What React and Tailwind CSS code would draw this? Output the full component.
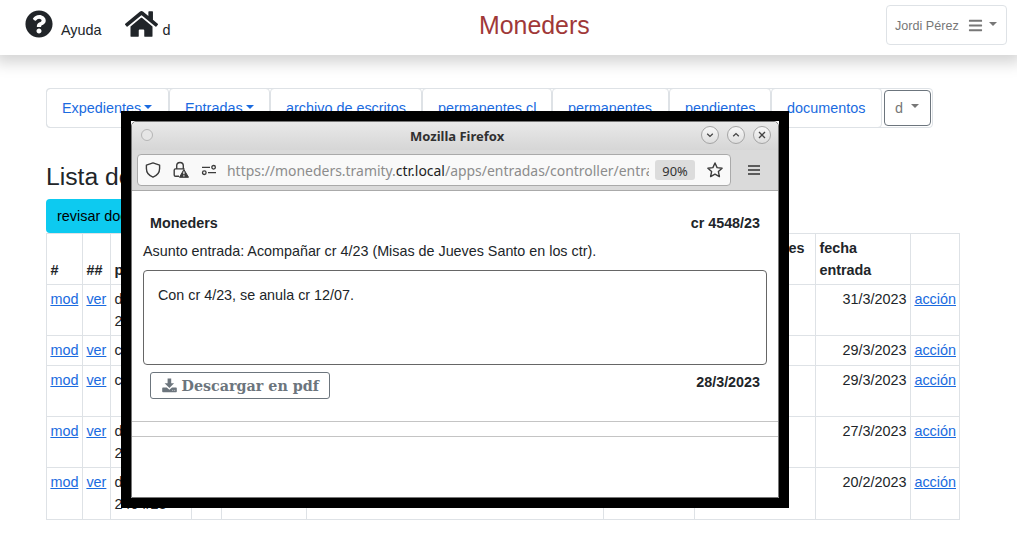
import React from "react";
import { FaQuestionCircle, FaHome, FaBars } from "react-icons/fa";

const menu = [
  { label: "Expedientes", width: "w-[123px]", caret: true },
  { label: "Entradas", width: "w-[101px]", caret: true },
  { label: "archivo de escritos", width: "w-[152px]" },
  { label: "permanentes cl", width: "w-[130px]" },
  { label: "permanentes", width: "w-[117px]" },
  { label: "pendientes", width: "w-[102px]" },
  { label: "documentos", width: "w-[111px]" },
];

const rows = [
  { protocol: ["dlb", "2611/23"], date: "31/3/2023", height: "h-[51px]" },
  { protocol: ["cr 5/23"], date: "29/3/2023", height: "h-[30px]" },
  { protocol: ["cr 4/23"], date: "29/3/2023", height: "h-[51px]" },
  { protocol: ["dlb", "2520/23"], date: "27/3/2023", height: "h-[51px]" },
  { protocol: ["dlb", "2404/23"], date: "20/2/2023", height: "h-[52px]" },
];

const columns = "grid grid-cols-[36px_28px_81px_30px_85px_297px_91px_121px_95px_49px]";
const cell = "border-r border-b border-[#dee2e6] pl-[3.4px] pr-[3.4px] pt-[3px]";

function Caret({ className = "" }) {
  return (
    <span
      className={`inline-block border-x-[4.3px] border-t-[4.3px] border-x-transparent border-t-current ${className}`}
    />
  );
}

function Header() {
  return (
    <header className="flex h-[55px] justify-between bg-white shadow-[0_3px_14px_5px_rgba(0,0,0,0.17)]">
      <div className="flex w-[300px] pl-[25px]">
        <FaQuestionCircle className="mt-[10px] size-[28px]" />
        <span className="ml-[8px] mt-[19px]">Ayuda</span>
        <FaHome className="ml-[23px] mt-[8px] h-[32px] w-[33px]" />
        <span className="ml-[5px] mt-[19px]">d</span>
      </div>
      <h1 className="mt-[6px] w-[300px] pl-[36px] text-[24.9px] leading-[38px] text-[#a03838]">Moneders</h1>
      <button className="mr-[10px] mt-[5px] flex h-[40px] w-[121px] items-center rounded-[4px] border border-[#dee2e6] pl-[8px] text-[12.6px] text-[#777]">
        <span className="mt-[2px] w-[73px] text-left">Jordi Pérez</span>
        <FaBars className="size-[15px]" />
        <Caret className="-mt-[2px] ml-[6px]" />
      </button>
    </header>
  );
}

function Menu() {
  return (
    <nav className="ml-[46px] mt-[33px] flex h-[40px] w-[887px] rounded-[4px] border border-[#dee2e6] text-[#1a6be0]">
      <div className="-ml-px -mt-px flex h-[40px]">
        {menu.map((m) => (
          <a
            key={m.label}
            className={`flex h-full shrink-0 items-center rounded-[4px] border border-[#dee2e6] pl-[15px] whitespace-nowrap ${m.width}`}
          >
            {m.label}
            {m.caret && <Caret className="ml-[3px] -mt-[3px]" />}
          </a>
        ))}
      </div>
      <button className="ml-[2px] mt-px flex h-[36px] w-[47px] items-center rounded-[4px] border border-[#6c757d] pl-[10px] text-[#777]">
        d
        <Caret className="ml-[8px] -mt-[4px]" />
      </button>
    </nav>
  );
}

function EntryTable() {
  return (
    <div className="ml-[46px] w-[914px] border-l border-t border-[#dee2e6]">
      <div className={`${columns} h-[51px] font-bold`}>
        <div className={`${cell} flex items-end pb-[3px]`}>#</div>
        <div className={`${cell} flex items-end pb-[3px]`}>##</div>
        <div className={`${cell} flex items-end pb-[3px]`}>protocolo</div>
        <div className={cell} />
        <div className={cell} />
        <div className={cell} />
        <div className={cell} />
        <div className={`${cell} flex justify-end`}>
          <span className="mr-[7px]">pendientes</span>
        </div>
        <div className={cell}>
          fecha
          <br />
          entrada
        </div>
        <div className={cell} />
      </div>
      {rows.map((r, i) => (
        <div key={i} className={`${columns} ${r.height}`}>
          <div className={cell}>
            <a className="text-[#1a6be0] underline">mod</a>
          </div>
          <div className={cell}>
            <a className="text-[#1a6be0] underline">ver</a>
          </div>
          <div className={cell}>
            {r.protocol.map((p) => (
              <div key={p}>{p}</div>
            ))}
          </div>
          <div className={cell} />
          <div className={cell} />
          <div className={cell} />
          <div className={cell} />
          <div className={cell} />
          <div className={`${cell} text-right`}>{r.date}</div>
          <div className={cell}>
            <a className="text-[#1a6be0] underline">acción</a>
          </div>
        </div>
      ))}
    </div>
  );
}

function WindowButton({ children }) {
  return (
    <span className="flex size-[18px] items-center justify-center rounded-full border border-[#a5a5a5] bg-linear-to-b from-[#f8f8f8] to-[#dedede]">
      <svg viewBox="0 0 10 10" className="size-[10px]" fill="none" stroke="#444" strokeWidth="1.3">
        {children}
      </svg>
    </span>
  );
}

function TitleBar() {
  return (
    <div className="flex h-[28px] items-center rounded-t-[4px] bg-linear-to-b from-[#e9e9e9] to-[#d6d6d6]">
      <span className="ml-[9px] -mt-[2px] size-[12px] rounded-full border border-[#b5b5b5] bg-[#e6e6e6]" />
      <span className="ml-[257px] -mt-[1px] w-[290px] font-['Noto_Sans',sans-serif] text-[13px] font-bold text-[#303030]">
        Mozilla Firefox
      </span>
      <div className="-mt-[2px] flex gap-[8px] pl-[0.5px]">
        <WindowButton>
          <path d="M2.2 3.8 5 6.4 7.8 3.8" />
        </WindowButton>
        <WindowButton>
          <path d="M2.2 6.2 5 3.6 7.8 6.2" />
        </WindowButton>
        <WindowButton>
          <path d="m2 2 6 6M8 2 2 8" />
        </WindowButton>
      </div>
    </div>
  );
}

function AddressBar() {
  return (
    <div className="flex h-[41px] items-center border-b border-[#aaa] bg-[#dadada] pl-[5px]">
      <div className="flex h-[32px] w-[594px] items-center rounded-[4px] border border-[#aaa] bg-[#f9f9f9] pl-[7px] text-[#3c3c3c]">
        <svg viewBox="0 0 16 16" className="size-[16px]" fill="none" stroke="currentColor" strokeWidth="1.4" strokeLinejoin="round">
          <path d="M8 .9 14.6 3.2V6.6C14.6 10.5 11.8 13.8 8 15.2 4.2 13.8 1.4 10.5 1.4 6.6V3.2Z" />
        </svg>
        <svg viewBox="0 0 16 18" className="ml-[12px] h-[18px] w-[16px]" fill="none">
          <path d="M3.7 8V4.8a3.3 3.3 0 0 1 6.6 0V8M6 15.2H2.5A1.3 1.3 0 0 1 1.2 13.9V9.2A1.3 1.3 0 0 1 2.5 7.9h9" stroke="currentColor" strokeWidth="1.4" />
          <path d="M10.9 8.5 15.5 16.3H6.5Z" fill="currentColor" stroke="currentColor" strokeLinejoin="round" />
          <path d="M10.9 10.5V13.2M10.9 14.3V15.5" stroke="#fff" strokeWidth="1.2" />
        </svg>
        <svg viewBox="0 0 16 12" className="ml-[12px] h-[12px] w-[16px]" fill="none" stroke="currentColor" strokeWidth="1.3">
          <path d="M1 3.3h8M7 8.7h8" />
          <circle cx="12.6" cy="3.3" r="1.8" />
          <circle cx="3.3" cy="8.7" r="1.8" />
        </svg>
        <span className="ml-[10px] mt-[2px] w-[422px] shrink-0 overflow-hidden whitespace-nowrap font-['Noto_Sans',sans-serif] text-[13.95px] text-[#8c8c8c]">
          https://moneders.tramity.<span className="text-[#222]">ctr.local</span>/apps/entradas/controller/entra
        </span>
        <span className="ml-[6px] flex h-[20px] w-[40px] shrink-0 items-center justify-center rounded-[3px] bg-[#dcdcdc] pt-px font-['Noto_Sans',sans-serif] text-[12.9px] text-[#333]">
          90%
        </span>
        <svg viewBox="0 0 16 16" className="ml-[12px] size-[16px] shrink-0" fill="none" stroke="currentColor" strokeWidth="1.4" strokeLinejoin="round">
          <path d="m8 1 2.1 4.6 5 .6-3.7 3.4 1 5L8 12.1 3.6 14.6l1-5L.9 6.2l5-.6Z" />
        </svg>
      </div>
      <svg viewBox="0 0 12 10" className="ml-[17px] h-[10px] w-[12px]" stroke="#333" strokeWidth="1.3">
        <path d="M0 1h12M0 5h12M0 9h12" />
      </svg>
    </div>
  );
}

function DownloadIcon() {
  return (
    <svg viewBox="0 0 15 15" className="mr-[5px] size-[15px] shrink-0" fill="currentColor">
      <path d="M5.6 0.5h3.6v4.7h2.9L7.4 9.9 2.6 5.2h3Z" />
      <path d="M1 9.5h3.8l2.6 2.2L10 9.500h4a.8.8 0 0 1 .8.8v3.200a.8.8 0 0 1-.8.8H1a.8.8 0 0 1-.8-.8v-3.200a.8.8 0 0 1 .8-.8Z" />
      <path d="M10.200 12.400h1M12.200 12.400h1" stroke="#fff" strokeWidth=".6" />
    </svg>
  );
}

function EntryWindow() {
  return (
    <section className="absolute left-[121px] top-[111px] h-[397px] w-[668px] bg-black p-[10px] text-[14.34px]">
      <div className="bg-white">
        <div className="flex h-[377px] flex-col overflow-hidden rounded-t-[5px] border border-[#777] bg-white">
          <TitleBar />
          <AddressBar />
          <div className="flex justify-between pl-[18px] pr-[18px] pt-[21px] font-bold">
            <span>Moneders</span>
            <span>cr 4548/23</span>
          </div>
          <p className="mt-[6px] pl-[11px]">Asunto entrada: Acompañar cr 4/23 (Misas de Jueves Santo en los ctr).</p>
          <div className="ml-[11px] mt-[8px] h-[95px] w-[624px] shrink-0 rounded-[4px] border border-[#666] pl-[14px] pt-[13px]">
            Con cr 4/23, se anula cr 12/07.
          </div>
          <div className="mt-[7px] flex justify-between pl-[18px] pr-[18px]">
            <button className="flex h-[27px] w-[180px] items-center rounded-[3px] border border-[#6c757d] pl-[10.5px] font-['DejaVu_Serif',serif] text-[14.3px] font-bold text-[#6c757d]">
              <DownloadIcon />
              <span className="whitespace-nowrap">Descargar en pdf</span>
            </button>
            <span className="-mt-[1px] font-bold">28/3/2023</span>
          </div>
          <div className="mt-[22px] h-[16px] shrink-0 border-y border-[#c4c4c4]" />
        </div>
      </div>
    </section>
  );
}

export default function App() {
  return (
    <main className="relative h-[551px] w-[1017px] overflow-hidden bg-white font-['Liberation_Sans',Arial,sans-serif] text-[14.4px] leading-[22px] text-[#212529]">
      <Header />
      <Menu />
      <h2 className="ml-[46px] mt-[31px] text-[24.7px] leading-[35px]">Lista de entradas</h2>
      <button className="ml-[46px] mt-[5px] block h-[34px] w-[155px] rounded-[4px] bg-[#0dcaf0] pl-[11px] text-left text-black">
        revisar documentos
      </button>
      <EntryTable />
      <EntryWindow />
    </main>
  );
}
